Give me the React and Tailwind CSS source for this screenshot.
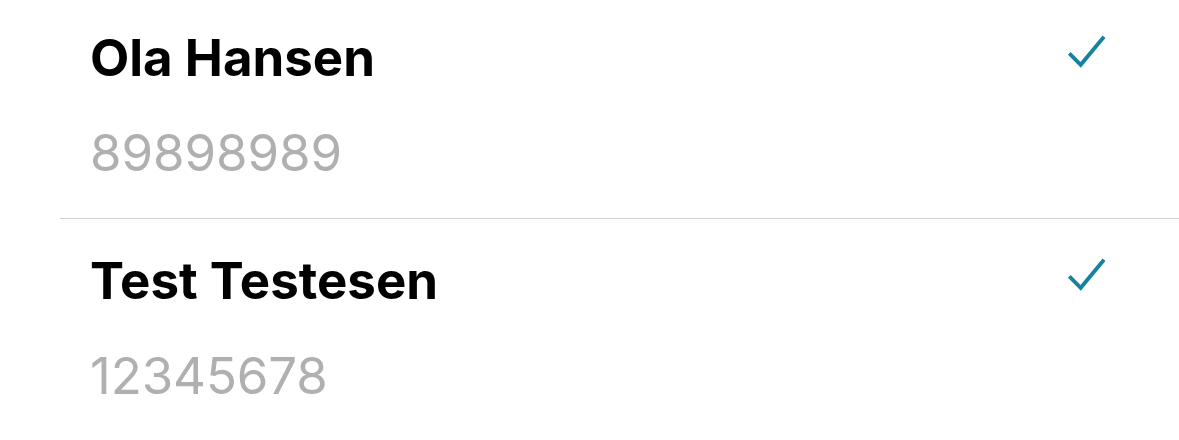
const CONTACTS = [
  { name: 'Ola Hansen', phone: '89898989' },
  { name: 'Test Testesen', phone: '12345678' },
];

const Check = () => (
  <svg width="40" height="34" viewBox="0 0 40 34" fill="none" className="mt-[7px] shrink-0">
    <path d="M2.3 19.3 L13.7 30.8 L37 2.7" stroke="#17829f" strokeWidth="3.8" strokeLinecap="butt" strokeLinejoin="miter" />
  </svg>
);

export default function App() {
  return (
    <div className="w-[1179px] h-[440px] overflow-hidden bg-white" style={{ fontFamily: 'Inter, "Noto Sans", sans-serif' }}>
      <div className="-mt-[4px]">
        {CONTACTS.map((c) => (
          <div key={c.phone} className="ml-[60px] border-b border-[#d0d0d0]">
            <div className="flex items-start justify-between pl-[30px] pr-[72px] pt-[31px] pb-[34px]">
              <div>
                <p className="text-[51px] leading-[62px] font-bold text-black">{c.name}</p>
                <p className="mt-[33px] text-[51px] leading-[62px] text-[#b0b0b0] tracking-[-0.1px]">{c.phone}</p>
              </div>
              <Check />
            </div>
          </div>
        ))}
      </div>
    </div>
  );
}
